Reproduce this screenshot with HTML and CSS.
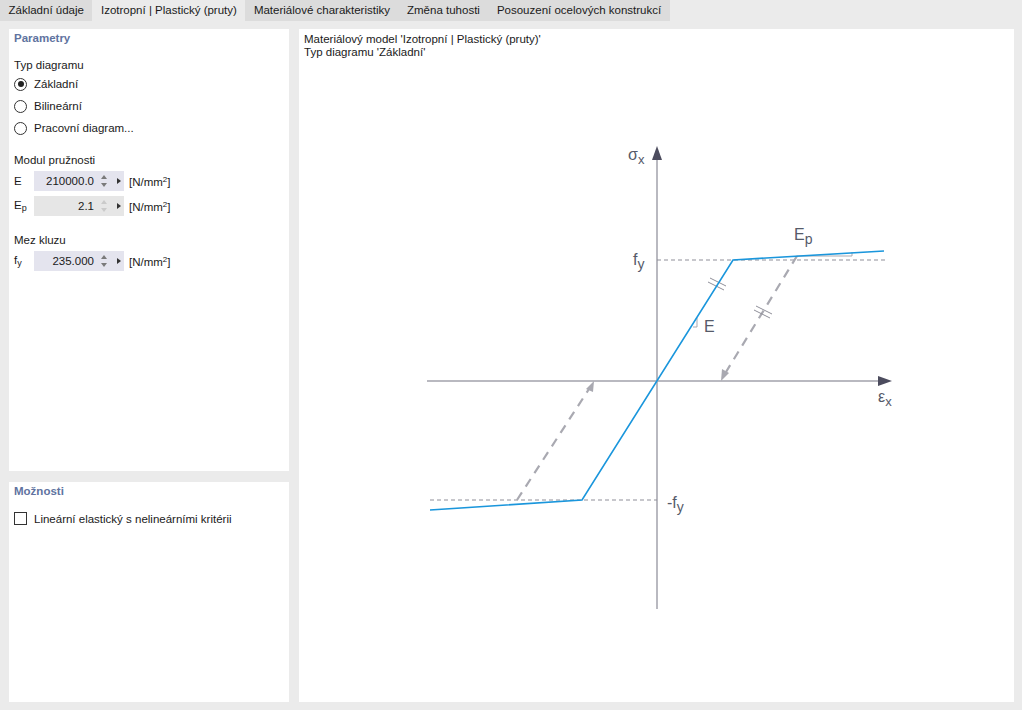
FILE: index.html
```html
<!DOCTYPE html>
<html>
<head>
<meta charset="utf-8">
<link rel="stylesheet" href="styles.css">
</head>
<body>
<div class="tabs">
  <div class="tab">Základní údaje</div>
  <div class="tab active">Izotropní | Plastický (pruty)</div>
  <div class="tab">Materiálové charakteristiky</div>
  <div class="tab">Změna tuhosti</div>
  <div class="tab">Posouzení ocelových konstrukcí</div>
</div>
<div class="main">
  <div class="left">
    <div class="panel params">
      <div class="ptitle">Parametry</div>
      <div class="label first">Typ diagramu</div>
      <div class="radio"><span class="rb on"></span>Základní</div>
      <div class="radio"><span class="rb"></span>Bilineární</div>
      <div class="radio"><span class="rb"></span>Pracovní diagram...</div>
      <div class="label sec">Modul pružnosti</div>
      <div class="field"><span class="sym">E</span><span class="inp"><span class="val">210000.0</span><span class="spin"><i class="up"></i><i class="dn"></i></span></span><span class="tri"></span><span class="unit">[N/mm<sup>2</sup>]</span></div>
      <div class="field"><span class="sym">E<sub>p</sub></span><span class="inp dis"><span class="val">2.1</span><span class="spin"><i class="up"></i><i class="dn"></i></span></span><span class="tri"></span><span class="unit">[N/mm<sup>2</sup>]</span></div>
      <div class="label sec2">Mez kluzu</div>
      <div class="field"><span class="sym">f<sub>y</sub></span><span class="inp"><span class="val">235.000</span><span class="spin"><i class="up"></i><i class="dn"></i></span></span><span class="tri"></span><span class="unit">[N/mm<sup>2</sup>]</span></div>
    </div>
    <div class="panel opts">
      <div class="ptitle">Možnosti</div>
      <div class="check"><span class="cb"></span>Lineární elastický s nelineárními kritérii</div>
    </div>
  </div>
  <div class="panel right">
    <div class="desc">Materiálový model 'Izotropní | Plastický (pruty)'<br>Typ diagramu 'Základní'</div>
    <svg class="diagram" width="715" height="673" viewBox="299 29 715 673">
      <g stroke="#b9b9c0" stroke-width="2" fill="none">
        <line x1="657" y1="158" x2="657" y2="609"/>
        <line x1="427" y1="381" x2="880" y2="381"/>
      </g>
      <polygon points="657,146 652,160 662,160" fill="#4c4c5e"/>
      <polygon points="892,381 878,376 878,386" fill="#4c4c5e"/>
      <g stroke="#8f8f99" stroke-width="1" stroke-dasharray="4,3">
        <line x1="657" y1="260" x2="886" y2="260"/>
        <line x1="430" y1="500" x2="657" y2="500"/>
      </g>
      <g stroke="#a9a9b1" stroke-width="1" fill="none">
        <polyline points="797,256 852,256 852,252"/>
        <polyline points="693,327 697,327 697,318"/>
      </g>
      <g stroke="#a9a9b1" stroke-width="2.2" stroke-dasharray="9,7" fill="none">
        <line x1="797" y1="256" x2="726" y2="372"/>
        <line x1="517" y1="500" x2="589" y2="389"/>
      </g>
      <polygon points="721,381 722,369 729,373" fill="#a9a9b1"/>
      <polygon points="594,381 586,389 593,392" fill="#a9a9b1"/>
      <g stroke="#8f8f99" stroke-width="1">
        <line x1="708" y1="282" x2="724" y2="290"/>
        <line x1="710" y1="278" x2="726" y2="286"/>
        <line x1="754" y1="310" x2="770" y2="318"/>
        <line x1="756" y1="306" x2="772" y2="314"/>
      </g>
      <polyline points="430,510 582,500 733,260 884,251" stroke="#1a96dc" stroke-width="1.6" fill="none"/>
      <g fill="#555a69" font-family="'Liberation Sans', Arial, sans-serif">
        <text x="628" y="160" font-size="16">σ<tspan font-size="13" dy="4">x</tspan></text>
        <text x="878" y="402" font-size="16">ε<tspan font-size="13" dy="4">x</tspan></text>
        <text x="633" y="265" font-size="16">f<tspan font-size="14" dy="4">y</tspan></text>
        <text x="667" y="508" font-size="16">-f<tspan font-size="14" dy="4">y</tspan></text>
        <text x="704" y="332" font-size="16">E</text>
        <text x="794" y="240" font-size="16">E<tspan font-size="14" dy="4">p</tspan></text>
      </g>
    </svg>
  </div>
</div>
</body>
</html>
```
FILE: styles.css
```css
html, body { margin: 0; padding: 0; }
body {
  width: 1022px; height: 710px; overflow: hidden;
  background: #ebebeb;
  font-family: "Liberation Sans", Arial, sans-serif;
  font-size: 11.5px; color: #1a1a1a;
}
.tabs { display: flex; height: 21px; background: #ebebeb; }
.tab {
  background: #dcdcdc; padding: 0 8.5px; line-height: 21px; white-space: nowrap;
}
.tab.active { background: #ebebeb; }
.main { display: flex; gap: 10px; padding: 8px 8px 8px 9px; height: 673px; }
.left { width: 280px; display: flex; flex-direction: column; gap: 11px; }
.panel { background: #fff; }
.params { height: 442px; padding: 1px 0 0 5px; box-sizing: border-box; }
.opts { flex: 1; padding: 1px 0 0 5px; }
.right { flex: 1; position: relative; }
.ptitle { color: #6073a0; font-weight: bold; line-height: 16px; }
.label { line-height: 16px; }
.label.first { margin-top: 11px; }
.label.sec { margin-top: 13px; }
.label.sec2 { margin-top: 16px; }
.radio { display: flex; align-items: center; height: 22px; }
.rb {
  width: 11px; height: 11px; border: 1px solid #333; border-radius: 50%;
  margin-right: 7px; box-sizing: content-box; position: relative;
}
.rb.on::after {
  content: ""; position: absolute; left: 2.5px; top: 2.5px; width: 6px; height: 6px;
  background: #222; border-radius: 50%;
}
.field { display: flex; align-items: center; height: 20px; margin-top: 5px; }
.label + .field { margin-top: 3px; }
.sym { width: 20px; }
.sym sub { font-size: 9px; vertical-align: -2px; }
.inp {
  width: 90px; height: 20px; background: #e4e4ee; display: flex; align-items: center;
  justify-content: flex-end; box-sizing: border-box; padding-right: 16px;
  position: relative;
}
.inp.dis { background: #e6e6e6; }
.inp.dis .spin i.up { border-bottom-color: #cacaca; }
.inp.dis .spin i.dn { border-top-color: #cacaca; }
.spin {
  position: absolute; right: 17px; top: 4px; width: 7px; height: 12px;
  display: flex; flex-direction: column; align-items: center; justify-content: space-between;
}
.spin i { display: block; width: 0; height: 0; border-left: 3px solid transparent; border-right: 3px solid transparent; }
.spin i.up { border-bottom: 4px solid #7a7a7a; }
.spin i.dn { border-top: 4px solid #7a7a7a; }
.val { margin-right: 14px; }
.tri {
  width: 0; height: 0; border-left: 4px solid #333; border-top: 3.5px solid transparent;
  border-bottom: 3.5px solid transparent; margin: 0 8px 0 -7px; position: relative;
}
.unit sup { font-size: 8px; vertical-align: 4px; }
.check { display: flex; align-items: center; margin-top: 13px; }
.cb { width: 11px; height: 11px; border: 1px solid #333; margin-right: 7px; }
.desc { padding: 4px 0 0 5px; line-height: 12.5px; }
.diagram { position: absolute; left: 0; top: 0; }
```
